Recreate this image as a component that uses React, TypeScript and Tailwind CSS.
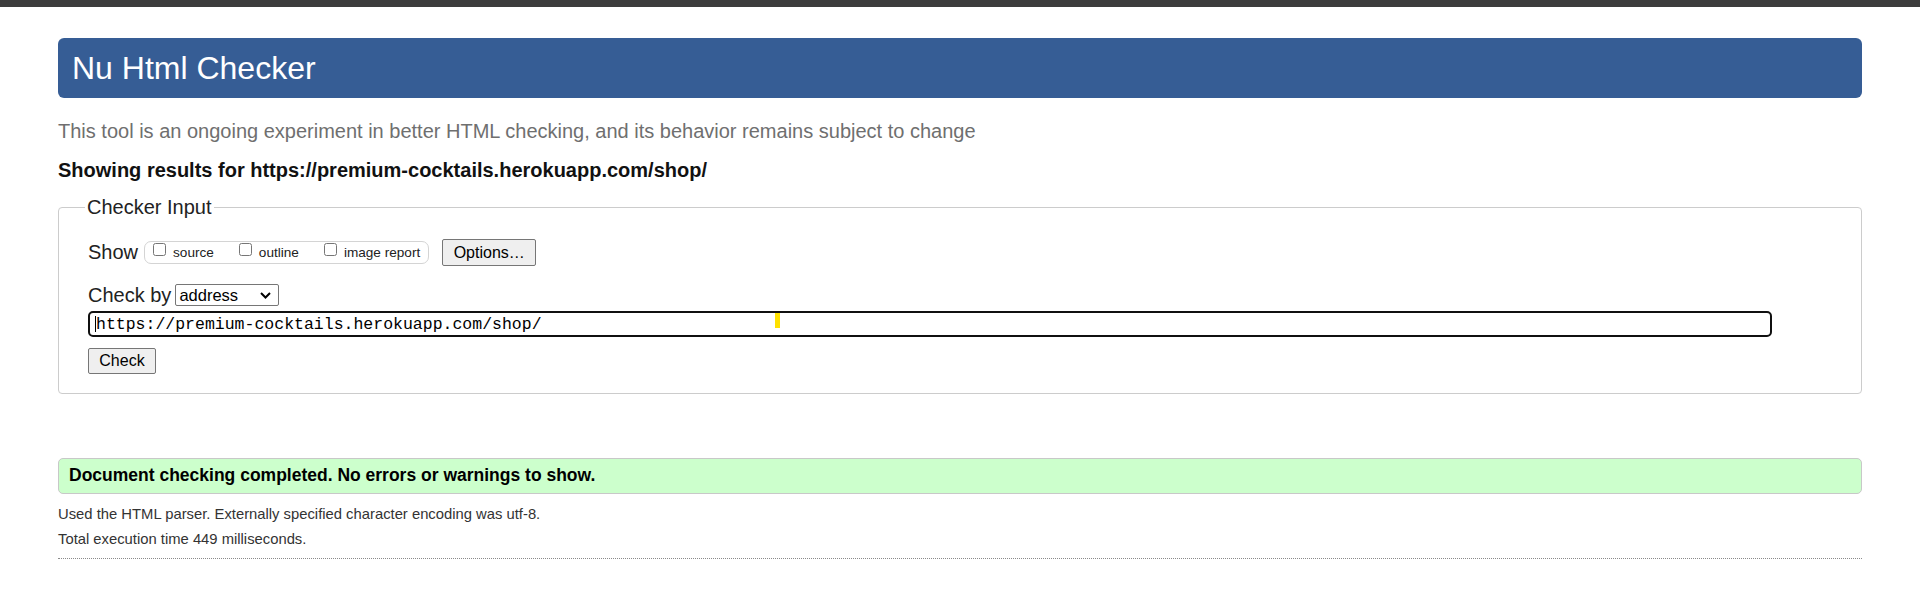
import React from 'react';

export default function App() {
  const [url, setUrl] = React.useState('https://premium-cocktails.herokuapp.com/shop/');
  const [checkBy, setCheckBy] = React.useState('address');

  return (
    <div className="min-h-screen bg-white font-['Liberation_Sans',Arial,sans-serif] text-black">
      <div className="h-[7px] bg-[#3c3c3c]" />

      <div className="mx-[58px]">
        <h1 className="mt-[31px] flex h-[60px] items-center rounded-[6px] bg-[#365d95] px-[14px] text-[32px] leading-none text-white">
          Nu Html Checker
        </h1>

        <p className="mt-[21px] text-[20px] leading-[24px] text-[#6f6f6f]">
          This tool is an ongoing experiment in better HTML checking, and its behavior remains subject to change
        </p>

        <p className="mt-[15px] text-[20px] font-bold leading-[24px] text-[#111]">
          Showing results for https://premium-cocktails.herokuapp.com/shop/
        </p>

        <fieldset className="mt-[13px] rounded-[4px] border border-[#cccccc] px-[29px] pb-[19px] pt-[20px]">
          <legend className="-ml-[3px] px-[2px] text-[20px] leading-[24px] text-[#222]">Checker Input</legend>

          {/* Show row */}
          <div className="flex h-[27px] items-center">
            <span className="text-[20px] leading-[27px] text-[#222]">Show</span>
            <div className="ml-[6px] flex h-[23px] items-start gap-[25px] rounded-[7px] border border-[#d4d4d4] px-[8px]">
              {['source', 'outline', 'image report'].map((label) => (
                <label key={label} className="flex items-start gap-[7px]">
                  <input type="checkbox" className="m-0 mt-[1px] h-[13px] w-[13px]" />
                  <span className="pt-[1px] text-[13.6px] leading-[19px] text-[#222]">{label}</span>
                </label>
              ))}
            </div>
            <button className="ml-[13px] h-[27px] w-[94px] rounded-[2px] border border-[#767676] bg-[#efefef] text-[16px] leading-none text-black">
              Options…
            </button>
          </div>

          {/* Check by row */}
          <div className="mt-[18px] flex h-[22px] items-center">
            <span className="text-[20px] leading-[22px] text-[#222]">Check by</span>
            <div className="relative ml-[4px] h-[22px] w-[104px]">
              <select
                value={checkBy}
                onChange={(e) => setCheckBy(e.target.value)}
                className="h-[22px] w-[104px] appearance-none rounded-[2px] border border-[#767676] bg-white pl-[3px] text-[16.5px] leading-none text-black"
              >
                <option value="address">address</option>
                <option value="file">file upload</option>
                <option value="text">text input</option>
              </select>
              <svg
                className="pointer-events-none absolute right-[8px] top-[8px]"
                width="11"
                height="7"
                viewBox="0 0 11 7"
                fill="none"
              >
                <path d="M1 1 L5.5 5.5 L10 1" stroke="#000" strokeWidth="2" />
              </svg>
            </div>
          </div>

          {/* Address input */}
          <div className="relative mt-[5px] h-[26px] w-[1684px]">
            <input
              type="url"
              value={url}
              onChange={(e) => setUrl(e.target.value)}
              className="h-[26px] w-full rounded-[5px] border-2 border-[#101010] bg-white pl-[6px] font-['Liberation_Mono','DejaVu_Sans_Mono',monospace] text-[16.5px] leading-none text-black outline-none"
            />
            <span className="pointer-events-none absolute left-[7px] top-[5px] h-[16px] w-px bg-black" />
            <span className="pointer-events-none absolute left-[687px] top-[2px] h-[15px] w-[5px] bg-[#ffe100]" />
          </div>

          <button className="mt-[11px] h-[26px] w-[68px] rounded-[2px] border border-[#767676] bg-[#efefef] text-[16px] leading-none text-black">
            Check
          </button>
        </fieldset>

        <div className="mt-[64px] flex h-[36px] items-center rounded-[5px] border border-[#c8c8c8] bg-[#ccffcc] px-[10px]">
          <p className="text-[17.5px] font-bold leading-none text-black">
            Document checking completed. No errors or warnings to show.
          </p>
        </div>

        <p className="mt-[8px] text-[14.8px] leading-[25px] text-[#333]">
          Used the HTML parser. Externally specified character encoding was utf-8.
        </p>
        <p className="text-[14.8px] leading-[25px] text-[#333]">Total execution time 449 milliseconds.</p>

        <div className="mt-[6px] border-t border-dotted border-[#8a8a8a]" />
      </div>
    </div>
  );
}
